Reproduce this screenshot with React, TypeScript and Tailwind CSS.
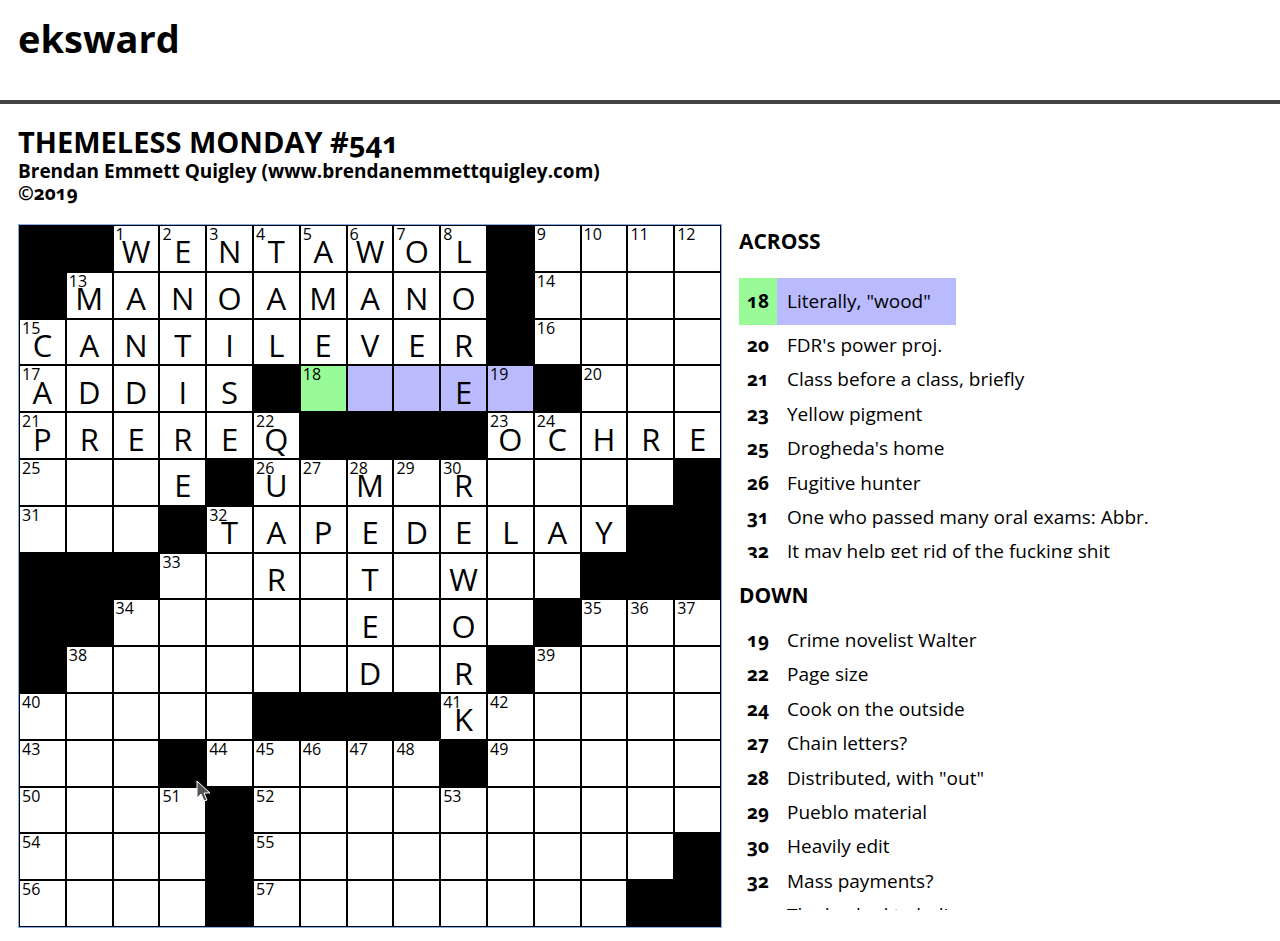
import React from 'react';

const ROWS = [
  '##WENTAWOL#....',
  '#MANOAMANO#....',
  'CANTILEVER#....',
  'ADDIS#...E.#...',
  'PREREQ####OCHRE',
  '...E#U.M.R....#',
  '...#TAPEDELAY##',
  '###..R.T.W..###',
  '##.....E.O.#...',
  '#......D.R#....',
  '.....####K.....',
  '...#.....#.....',
  '....#..........',
  '....#.........#',
  '....#........##',
];

const ACTIVE = '3-6';
const WORD = ['3-7', '3-8', '3-9', '3-10'];

const ACROSS = [
  { n: 18, text: 'Literally, "wood"', active: true },
  { n: 20, text: "FDR's power proj." },
  { n: 21, text: 'Class before a class, briefly' },
  { n: 23, text: 'Yellow pigment' },
  { n: 25, text: "Drogheda's home" },
  { n: 26, text: 'Fugitive hunter' },
  { n: 31, text: 'One who passed many oral exams: Abbr.' },
  { n: 32, text: 'It may help get rid of the fucking shit' },
  { n: 33, text: 'Small amount' },
];

const DOWN = [
  { n: 19, text: 'Crime novelist Walter' },
  { n: 22, text: 'Page size' },
  { n: 24, text: 'Cook on the outside' },
  { n: 27, text: 'Chain letters?' },
  { n: 28, text: 'Distributed, with "out"' },
  { n: 29, text: 'Pueblo material' },
  { n: 30, text: 'Heavily edit' },
  { n: 32, text: 'Mass payments?' },
  { n: 33, text: 'The backed to believe' },
];

// standard crossword numbering
function numbers(rows: string[]) {
  const out: Record<string, number> = {};
  let n = 1;
  const black = (r: number, c: number) =>
    r < 0 || c < 0 || r >= rows.length || c >= rows[0].length || rows[r][c] === '#';
  rows.forEach((row, r) => {
    row.split('').forEach((ch, c) => {
      if (ch === '#') return;
      const across = black(r, c - 1) && !black(r, c + 1);
      const down = black(r - 1, c) && !black(r + 1, c);
      if (across || down) out[`${r}-${c}`] = n++;
    });
  });
  return out;
}

const NUMS = numbers(ROWS);

const Grid: React.FC = () => (
  <div className="border border-[#86adea] shrink-0">
    <div className="grid grid-cols-[repeat(15,1fr)] grid-rows-[repeat(15,1fr)] w-[702px] h-[702px]">
      {ROWS.map((row, r) =>
        row.split('').map((ch, c) => {
          const key = `${r}-${c}`;
          if (ch === '#') return <div key={key} className="bg-black border border-black" />;
          let bg = 'bg-white';
          if (key === ACTIVE) bg = 'bg-[#98fb98]';
          else if (WORD.includes(key)) bg = 'bg-[#babaff]';
          return (
            <div key={key} className={`relative border border-black ${bg}`}>
              {NUMS[key] && (
                <span className="absolute top-0 left-[2px] text-[16px] leading-none">{NUMS[key]}</span>
              )}
              {ch !== '.' && (
                <span className="absolute inset-0 flex items-center justify-center pt-[7px] text-[31px] leading-none">
                  {ch}
                </span>
              )}
            </div>
          );
        })
      )}
    </div>
  </div>
);

const ClueRow: React.FC<{ n: number; text: string; active?: boolean }> = ({ n, text, active }) => (
  <li className={`flex w-fit items-center whitespace-nowrap ${active ? 'h-[47px]' : 'h-[34.4px] pt-[6px]'}`}>
    <span className={`w-[38px] h-full flex items-center justify-center font-bold oldstyle-nums ${active ? 'bg-[#98fb98]' : ''}`}>
      {n}
    </span>
    <span className={`h-full flex items-center pl-[10px] ${active ? 'bg-[#babaff] pr-[25px]' : 'pr-[14px]'}`}>{text}</span>
  </li>
);

export default function App() {
  return (
    <div className="relative min-h-screen bg-white text-black font-['Open_Sans',sans-serif]">
      <header className="h-[100px] px-[18px] pt-[13px]">
        <h1 className="text-[38px] font-bold leading-[50px]">eksward</h1>
      </header>
      <div className="border-t-[4px] border-[#444]" />
      <main className="px-[18px] pt-[21px]">
        <h2 className="text-[29px] font-bold leading-[33px] oldstyle-nums">THEMELESS MONDAY #541</h2>
        <div className="mt-[2px] text-[19px] font-bold leading-[22px]">
          Brendan Emmett Quigley (www.brendanemmettquigley.com)
        </div>
        <div className="text-[19px] font-bold leading-[22px] oldstyle-nums">©2019</div>
        <div className="mt-[20px] flex gap-[17px]">
          <Grid />
          <section className="w-[530px] text-[19px]">
            <h3 className="mt-[3px] text-[21px] font-bold leading-[28px]">ACROSS</h3>
            <ul className="mt-[23px] h-[280px] overflow-hidden">
              {ACROSS.map((c) => (
                <ClueRow key={c.n} {...c} />
              ))}
            </ul>
            <h3 className="mt-[23px] text-[21px] font-bold leading-[28px]">DOWN</h3>
            <ul className="mt-[11px] h-[290px] overflow-hidden">
              {DOWN.map((c) => (
                <ClueRow key={c.n} {...c} />
              ))}
            </ul>
          </section>
        </div>
      </main>
      {/* mouse pointer */}
      <svg className="absolute left-[196px] top-[780px]" width="16" height="22" viewBox="0 0 16 22">
        <path d="M1 1 L1 18 L5 14 L8 21 L11 20 L8 13 L14 13 Z" fill="#555" stroke="#fff" strokeWidth="1" />
      </svg>
    </div>
  );
}
